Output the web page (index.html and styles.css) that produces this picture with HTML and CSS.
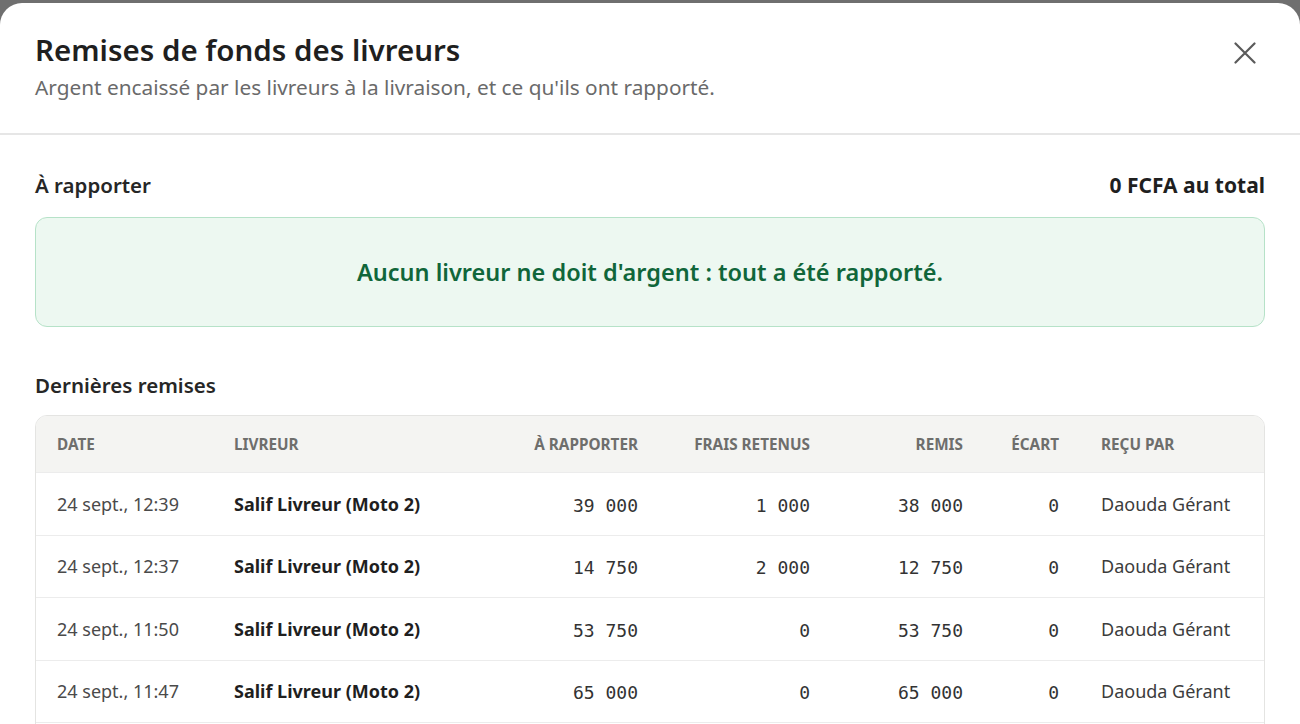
FILE: index.html
```html
<!DOCTYPE html>
<html lang="fr">
<head>
    <meta charset="UTF-8">
    <meta name="viewport" content="width=device-width, initial-scale=1.0">
    <title>Remises de fonds des livreurs</title>
    <link rel="stylesheet" href="styles.css">
</head>
<body>
    <div class="modal">
        <div class="modal-header">
            <div>
                <h1 class="modal-title">Remises de fonds des livreurs</h1>
                <p class="modal-subtitle">Argent encaissé par les livreurs à la livraison, et ce qu'ils ont rapporté.</p>
            </div>
            <button class="close-btn" aria-label="Fermer">
                <svg width="22" height="22" viewBox="0 0 22 22" fill="none" stroke="currentColor" stroke-width="2.2" stroke-linecap="round">
                    <path d="M1.5 1.5 L20.5 20.5 M20.5 1.5 L1.5 20.5"/>
                </svg>
            </button>
        </div>

        <div class="modal-body">
            <div class="section-head">
                <h2>À rapporter</h2>
                <span class="total">0 FCFA au total</span>
            </div>
            <div class="empty-box">Aucun livreur ne doit d'argent : tout a été rapporté.</div>

            <h2 class="section-title">Dernières remises</h2>
            <div class="table-wrap">
                <table class="remises">
                    <colgroup>
                        <col style="width:177px">
                        <col style="width:240px">
                        <col style="width:206px">
                        <col style="width:172px">
                        <col style="width:153px">
                        <col style="width:96px">
                        <col>
                    </colgroup>
                    <thead>
                        <tr>
                            <th>Date</th>
                            <th>Livreur</th>
                            <th class="num">À rapporter</th>
                            <th class="num">Frais retenus</th>
                            <th class="num">Remis</th>
                            <th class="num">Écart</th>
                            <th>Reçu par</th>
                        </tr>
                    </thead>
                    <tbody>
                        <tr>
                            <td class="date">24 sept., 12:39</td>
                            <td class="name">Salif Livreur (Moto 2)</td>
                            <td class="num mono">39 000</td>
                            <td class="num mono">1 000</td>
                            <td class="num mono">38 000</td>
                            <td class="num mono">0</td>
                            <td>Daouda Gérant</td>
                        </tr>
                        <tr>
                            <td class="date">24 sept., 12:37</td>
                            <td class="name">Salif Livreur (Moto 2)</td>
                            <td class="num mono">14 750</td>
                            <td class="num mono">2 000</td>
                            <td class="num mono">12 750</td>
                            <td class="num mono">0</td>
                            <td>Daouda Gérant</td>
                        </tr>
                        <tr>
                            <td class="date">24 sept., 11:50</td>
                            <td class="name">Salif Livreur (Moto 2)</td>
                            <td class="num mono">53 750</td>
                            <td class="num mono">0</td>
                            <td class="num mono">53 750</td>
                            <td class="num mono">0</td>
                            <td>Daouda Gérant</td>
                        </tr>
                        <tr>
                            <td class="date">24 sept., 11:47</td>
                            <td class="name">Salif Livreur (Moto 2)</td>
                            <td class="num mono">65 000</td>
                            <td class="num mono">0</td>
                            <td class="num mono">65 000</td>
                            <td class="num mono">0</td>
                            <td>Daouda Gérant</td>
                        </tr>
                    </tbody>
                </table>
            </div>
        </div>
    </div>
</body>
</html>
```

FILE: styles.css
```css
body {
    margin: 0;
    background: #6f6f6f;
    font-family: "Noto Sans", sans-serif;
    color: #222;
    height: 724px;
    overflow: hidden;
}

.modal {
    margin-top: 3px;
    background: #fff;
    border-radius: 22px 22px 0 0;
    height: 721px;
    overflow: hidden;
}

.modal-header {
    display: flex;
    justify-content: space-between;
    align-items: flex-start;
    padding: 27px 44px 0 35px;
    height: 103px;
    border-bottom: 2px solid #e6e6e6;
}

.modal-title {
    margin: 0;
    font-size: 29.5px;
    font-weight: 600;
    color: #1f1f1f;
    line-height: 40px;
}

.modal-subtitle {
    margin: 3px 0 0;
    font-size: 20.8px;
    color: #6a6a6a;
    line-height: 28px;
}

.close-btn {
    background: none;
    border: none;
    padding: 0;
    margin-top: 12px;
    color: #5a5a5a;
    cursor: pointer;
    width: 22px;
    height: 22px;
}

.modal-body {
    padding: 36px 35px 0;
}

.section-head {
    display: flex;
    justify-content: space-between;
    align-items: baseline;
}

.section-head h2,
.section-title {
    margin: 0;
    font-size: 20.5px;
    font-weight: 600;
    line-height: 28px;
    color: #262626;
}

.total {
    font-size: 21px;
    font-weight: 700;
    color: #1f1f1f;
}

.empty-box {
    margin-top: 18px;
    height: 108px;
    display: flex;
    align-items: center;
    justify-content: center;
    background: #edf8f1;
    border: 1px solid #b6e2c8;
    border-radius: 12px;
    color: #10663a;
    font-size: 23.5px;
    font-weight: 600;
}

.section-title {
    margin-top: 44px;
}

.table-wrap {
    margin-top: 16px;
    padding-bottom: 40px;
    border: 1px solid #e4e4e2;
    border-radius: 12px;
    overflow: hidden;
}

.remises {
    width: 100%;
    border-collapse: collapse;
    table-layout: fixed;
}

.remises th {
    background: #f4f4f2;
    height: 56px;
    padding: 0 21px;
    text-align: left;
    font-size: 15.3px;
    font-weight: 700;
    text-transform: uppercase;
    color: #6e6e6c;
}

.remises td {
    height: 61.5px;
    padding: 0 21px;
    border-top: 1px solid #ececec;
    border-bottom: 1px solid #ececec;
    font-size: 18px;
    color: #3c3c3c;
}

.remises .num {
    text-align: right;
}

.remises .date {
    color: #4a4a4a;
}

.remises .name {
    font-weight: 700;
    color: #1f1f1f;
}

/* amounts sit a touch lower than the text columns */
.remises .mono {
    font-family: "DejaVu Sans Mono", monospace;
    font-size: 18px;
    color: #333;
    height: 58.5px;
    padding-top: 3px;
}
```
